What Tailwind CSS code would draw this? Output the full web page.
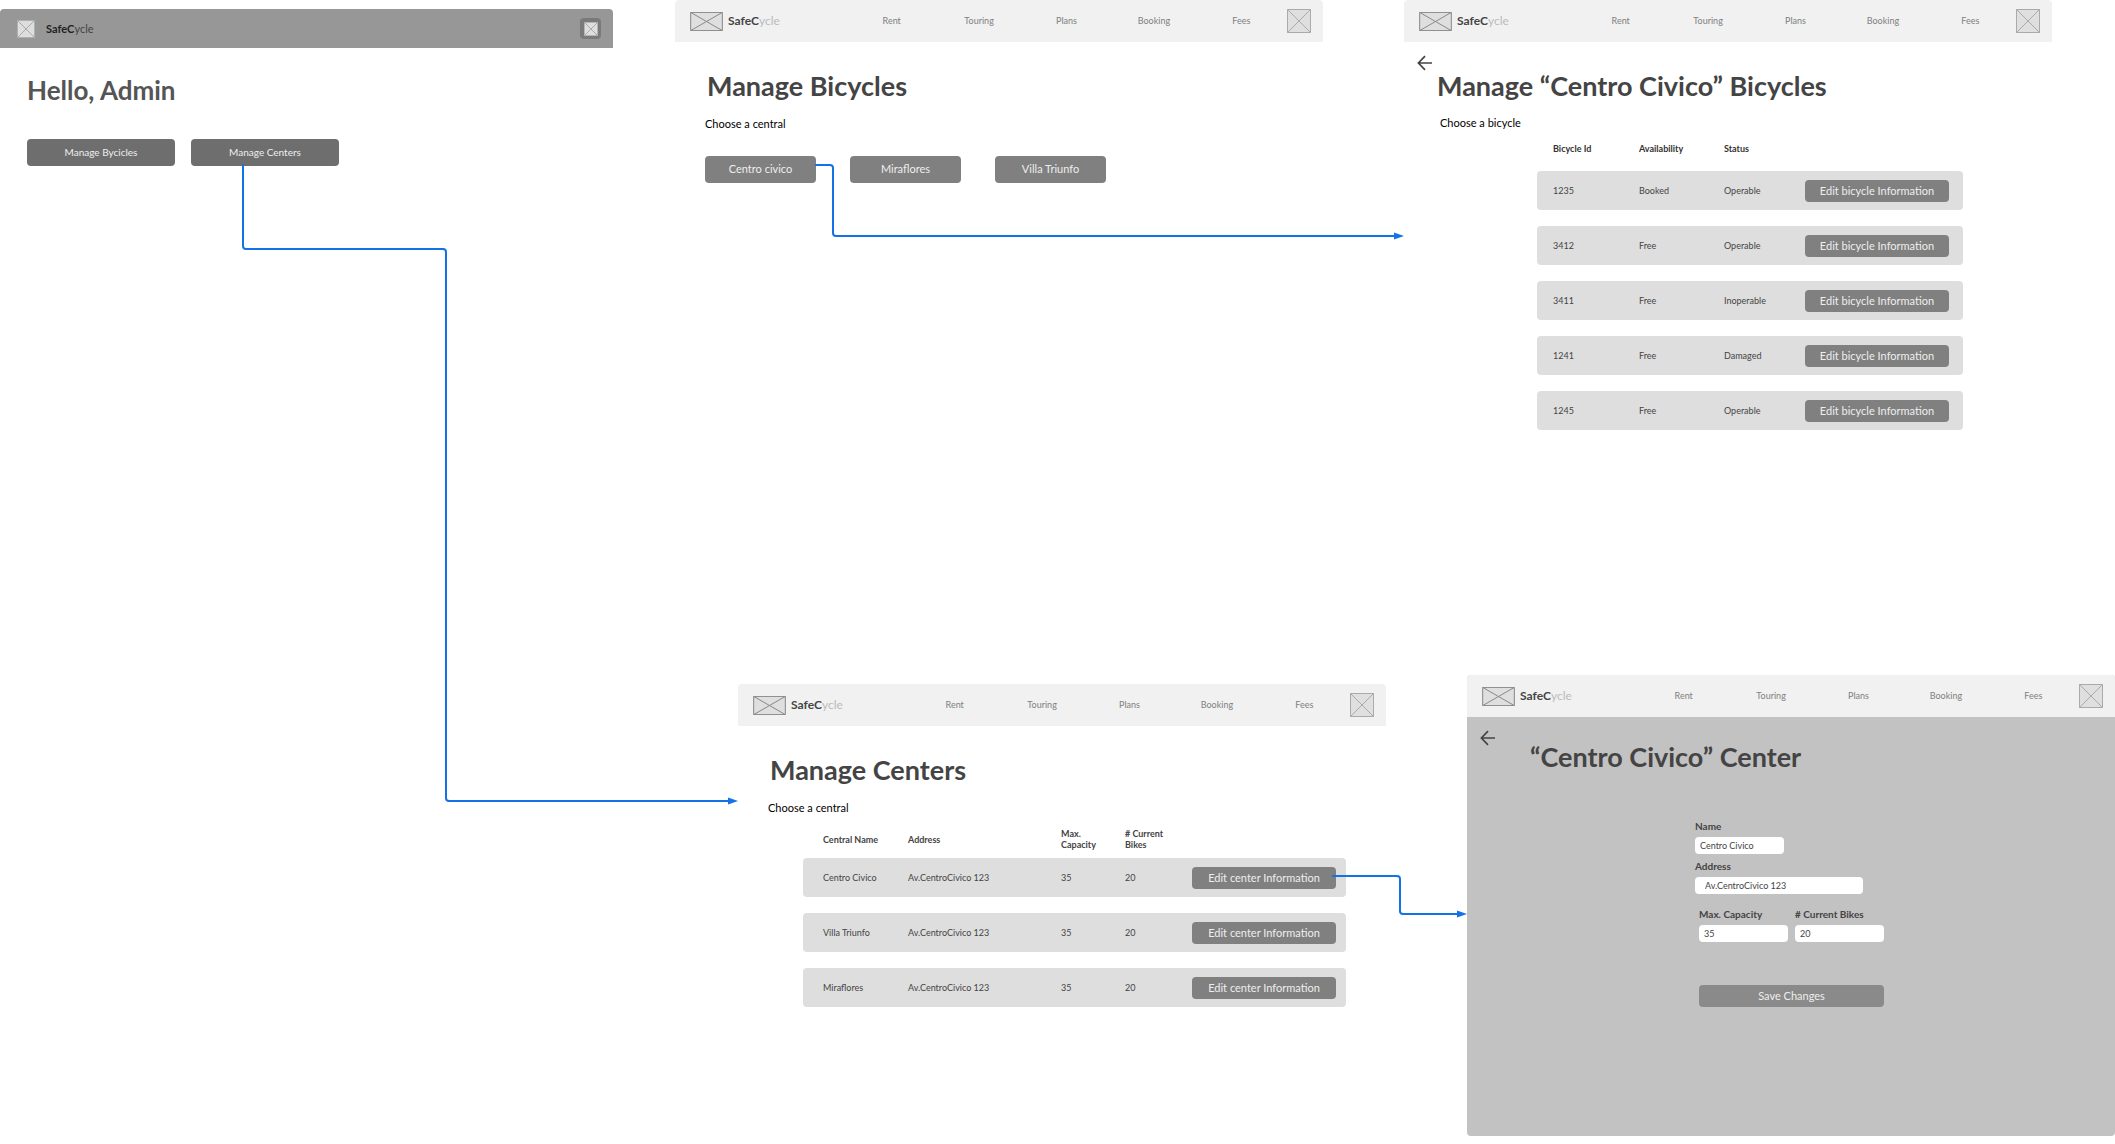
<!DOCTYPE html>
<html lang="en">
<head>
<meta charset="utf-8">
<title>SafeCycle admin flow</title>
<script src="https://cdn.jsdelivr.net/npm/@tailwindcss/browser@4"></script>
</head>
<body class="bg-white">
<svg class="hidden">
  <symbol id="cross" viewBox="0 0 24 24" preserveAspectRatio="none">
    <path d="M0.5 0.5H23.5V23.5H0.5ZM0.5 0.5L23.5 23.5M23.5 0.5L0.5 23.5" fill="none" stroke="currentColor" stroke-width="1" vector-effect="non-scaling-stroke"/>
  </symbol>
  <symbol id="back" viewBox="0 0 16 16">
    <path d="M15 8H1.5M8 1.2L1.4 8L8 14.8" fill="none" stroke="currentColor" stroke-width="1.7"/>
  </symbol>
</svg>

<main class="relative min-h-screen overflow-hidden font-['Lato',sans-serif] text-[#444]">

  <!-- Admin home -->
  <section class="absolute left-0 top-[9px] w-[613px]">
    <header class="flex h-[39px] items-center rounded-t bg-[#979797] pl-[17px] pr-3">
      <svg class="h-[18px] w-[18px] bg-[#dedede] text-[#aaa]"><use href="#cross"/></svg>
      <a href="#" class="ml-[11px] text-[11px] leading-4 text-[#444]"><b class="text-[#222]">SafeC</b>ycle</a>
      <button aria-label="Account" class="ml-auto flex h-[21px] w-[21px] items-center justify-center rounded bg-[#7a7a7a]">
        <svg class="h-[14px] w-[14px] bg-[#dedede] text-[#aaa]"><use href="#cross"/></svg>
      </button>
    </header>
    <div class="px-[27px] pt-6">
      <h1 class="text-[26px] font-bold leading-9 text-[#555]">Hello, Admin</h1>
      <div class="mt-[31px] flex gap-4">
        <button class="h-[27px] w-[148px] rounded bg-[#6e6e6e] text-[10px] text-[#eee]">Manage Bycicles</button>
        <button class="h-[27px] w-[148px] rounded bg-[#6e6e6e] text-[10px] text-[#eee]">Manage Centers</button>
      </div>
    </div>
  </section>

  <!-- Manage bicycles -->
  <section class="absolute left-[675px] top-0 w-[648px]">
    <header class="flex h-[42px] items-center rounded-t bg-[#f1f1f1] pl-[15px] pr-3">
      <svg class="h-[19px] w-[33px] bg-[#dfdfdf] text-[#888]"><use href="#cross"/></svg>
      <a href="#" class="ml-[5px] text-[12px] leading-4 text-[#bbb]"><b class="text-[#444]">SafeC</b>ycle</a>
      <nav class="ml-auto mr-[2px] grid w-[437px] grid-cols-5 text-center text-[9px] text-[#808080]">
        <a href="#">Rent</a><a href="#">Touring</a><a href="#">Plans</a><a href="#">Booking</a><a href="#">Fees</a>
      </nav>
      <svg class="h-6 w-6 bg-[#dfdfdf] text-[#aaa]"><use href="#cross"/></svg>
    </header>
    <div class="px-[30px] pt-[26px]">
      <h1 class="pl-[2px] text-[27px] font-bold leading-9">Manage Bicycles</h1>
      <p class="mt-3 text-[11px] leading-4 text-black">Choose a central</p>
      <div class="mt-6 flex gap-[34px]">
        <button class="h-[27px] w-[111px] rounded bg-[#808080] text-[11px] text-[#eee]">Centro civico</button>
        <button class="h-[27px] w-[111px] rounded bg-[#808080] text-[11px] text-[#eee]">Miraflores</button>
        <button class="h-[27px] w-[111px] rounded bg-[#808080] text-[11px] text-[#eee]">Villa Triunfo</button>
      </div>
    </div>
  </section>

  <!-- Bicycles of one center -->
  <section class="absolute left-[1404px] top-0 w-[648px]">
    <header class="flex h-[42px] items-center rounded-t bg-[#f1f1f1] pl-[15px] pr-3">
      <svg class="h-[19px] w-[33px] bg-[#dfdfdf] text-[#888]"><use href="#cross"/></svg>
      <a href="#" class="ml-[5px] text-[12px] leading-4 text-[#bbb]"><b class="text-[#444]">SafeC</b>ycle</a>
      <nav class="ml-auto mr-[2px] grid w-[437px] grid-cols-5 text-center text-[9px] text-[#808080]">
        <a href="#">Rent</a><a href="#">Touring</a><a href="#">Plans</a><a href="#">Booking</a><a href="#">Fees</a>
      </nav>
      <svg class="h-6 w-6 bg-[#dfdfdf] text-[#aaa]"><use href="#cross"/></svg>
    </header>
    <div class="flex items-start pl-[13px] pt-[13px]">
      <button aria-label="Back" class="h-4 w-4"><svg class="h-4 w-4"><use href="#back"/></svg></button>
      <div class="pl-1 pt-[13px]">
        <h1 class="text-[27px] font-bold leading-9">Manage “Centro Civico” Bicycles</h1>
        <p class="mt-[11px] pl-[3px] text-[11px] leading-4 text-black">Choose a bicycle</p>
      </div>
    </div>
    <table class="ml-[133px] mt-3 block w-[426px] text-left text-[9px] leading-3">
      <thead class="block"><tr class="grid grid-cols-[86px_85px_81px_144px] pl-4 text-[#333]">
        <th>Bicycle Id</th><th>Availability</th><th>Status</th>
      </tr></thead>
      <tbody class="mt-4 flex flex-col gap-4">
        <tr class="grid h-[39px] grid-cols-[86px_85px_81px_144px] items-center rounded bg-[#dedede] pl-4"><td>1235</td><td>Booked</td><td>Operable</td><td><button class="block h-[22px] w-full rounded bg-[#808080] text-[11px] text-[#eee]">Edit bicycle Information</button></td></tr>
        <tr class="grid h-[39px] grid-cols-[86px_85px_81px_144px] items-center rounded bg-[#dedede] pl-4"><td>3412</td><td>Free</td><td>Operable</td><td><button class="block h-[22px] w-full rounded bg-[#808080] text-[11px] text-[#eee]">Edit bicycle Information</button></td></tr>
        <tr class="grid h-[39px] grid-cols-[86px_85px_81px_144px] items-center rounded bg-[#dedede] pl-4"><td>3411</td><td>Free</td><td>Inoperable</td><td><button class="block h-[22px] w-full rounded bg-[#808080] text-[11px] text-[#eee]">Edit bicycle Information</button></td></tr>
        <tr class="grid h-[39px] grid-cols-[86px_85px_81px_144px] items-center rounded bg-[#dedede] pl-4"><td>1241</td><td>Free</td><td>Damaged</td><td><button class="block h-[22px] w-full rounded bg-[#808080] text-[11px] text-[#eee]">Edit bicycle Information</button></td></tr>
        <tr class="grid h-[39px] grid-cols-[86px_85px_81px_144px] items-center rounded bg-[#dedede] pl-4"><td>1245</td><td>Free</td><td>Operable</td><td><button class="block h-[22px] w-full rounded bg-[#808080] text-[11px] text-[#eee]">Edit bicycle Information</button></td></tr>
      </tbody>
    </table>
  </section>

  <!-- Manage centers -->
  <section class="absolute left-[738px] top-[684px] w-[648px]">
    <header class="flex h-[42px] items-center rounded-t bg-[#f1f1f1] pl-[15px] pr-3">
      <svg class="h-[19px] w-[33px] bg-[#dfdfdf] text-[#888]"><use href="#cross"/></svg>
      <a href="#" class="ml-[5px] text-[12px] leading-4 text-[#bbb]"><b class="text-[#444]">SafeC</b>ycle</a>
      <nav class="ml-auto mr-[2px] grid w-[437px] grid-cols-5 text-center text-[9px] text-[#808080]">
        <a href="#">Rent</a><a href="#">Touring</a><a href="#">Plans</a><a href="#">Booking</a><a href="#">Fees</a>
      </nav>
      <svg class="h-6 w-6 bg-[#dfdfdf] text-[#aaa]"><use href="#cross"/></svg>
    </header>
    <div class="px-[30px] pt-[26px]">
      <h1 class="pl-[2px] text-[27px] font-bold leading-9">Manage Centers</h1>
      <p class="mt-3 text-[11px] leading-4 text-black">Choose a central</p>
    </div>
    <table class="ml-[65px] mt-3 block w-[543px] text-left text-[9px] leading-[11px]">
      <thead class="block"><tr class="grid h-[22px] grid-cols-[85px_153px_64px_67px_144px] items-center pl-5">
        <th>Central Name</th><th>Address</th><th>Max.<br>Capacity</th><th># Current<br>Bikes</th>
      </tr></thead>
      <tbody class="mt-2 flex flex-col gap-4">
        <tr class="grid h-[39px] grid-cols-[85px_153px_64px_67px_144px] items-center rounded bg-[#dedede] pl-5"><td>Centro Civico</td><td>Av.CentroCivico 123</td><td>35</td><td>20</td><td><button class="block h-[22px] w-full rounded bg-[#808080] text-[11px] text-[#eee]">Edit center Information</button></td></tr>
        <tr class="grid h-[39px] grid-cols-[85px_153px_64px_67px_144px] items-center rounded bg-[#dedede] pl-5"><td>Villa Triunfo</td><td>Av.CentroCivico 123</td><td>35</td><td>20</td><td><button class="block h-[22px] w-full rounded bg-[#808080] text-[11px] text-[#eee]">Edit center Information</button></td></tr>
        <tr class="grid h-[39px] grid-cols-[85px_153px_64px_67px_144px] items-center rounded bg-[#dedede] pl-5"><td>Miraflores</td><td>Av.CentroCivico 123</td><td>35</td><td>20</td><td><button class="block h-[22px] w-full rounded bg-[#808080] text-[11px] text-[#eee]">Edit center Information</button></td></tr>
      </tbody>
    </table>
  </section>

  <!-- Edit one center -->
  <section class="absolute left-[1467px] top-[675px] w-[648px] rounded bg-[#c2c2c2] pb-[129px]">
    <header class="flex h-[42px] items-center rounded-t bg-[#f1f1f1] pl-[15px] pr-3">
      <svg class="h-[19px] w-[33px] bg-[#dfdfdf] text-[#888]"><use href="#cross"/></svg>
      <a href="#" class="ml-[5px] text-[12px] leading-4 text-[#bbb]"><b class="text-[#444]">SafeC</b>ycle</a>
      <nav class="ml-auto mr-[2px] grid w-[437px] grid-cols-5 text-center text-[9px] text-[#808080]">
        <a href="#">Rent</a><a href="#">Touring</a><a href="#">Plans</a><a href="#">Booking</a><a href="#">Fees</a>
      </nav>
      <svg class="h-6 w-6 bg-[#dfdfdf] text-[#aaa]"><use href="#cross"/></svg>
    </header>
    <div class="flex items-start pl-[13px] pt-[13px]">
      <button aria-label="Back" class="h-4 w-4"><svg class="h-4 w-4"><use href="#back"/></svg></button>
      <h1 class="pl-[34px] pt-[9px] text-[27px] font-bold leading-9">“Centro Civico” Center</h1>
    </div>
    <form class="ml-[228px] mt-[45px] w-[189px] text-[9px]">
      <label for="name" class="block text-[10px] font-bold leading-3">Name</label>
      <input id="name" value="Centro Civico" class="mt-[5px] block h-[17px] w-[89px] rounded bg-white px-[5px]">
      <label for="address" class="mt-[6px] block text-[10px] font-bold leading-3">Address</label>
      <input id="address" value="Av.CentroCivico 123" class="mt-[5px] block h-[17px] w-[168px] rounded bg-white px-[10px]">
      <div class="mt-[14px] grid grid-cols-2 gap-[7px] pl-1">
        <div>
          <label for="capacity" class="block text-[10px] font-bold leading-3">Max. Capacity</label>
          <input id="capacity" value="35" class="mt-[5px] block h-[17px] w-full rounded bg-white px-[5px]">
        </div>
        <div>
          <label for="bikes" class="block whitespace-nowrap text-[10px] font-bold leading-3"># Current Bikes</label>
          <input id="bikes" value="20" class="mt-[5px] block h-[17px] w-full rounded bg-white px-[5px]">
        </div>
      </div>
      <div class="pl-1 pt-[43px]">
        <button type="button" class="block h-[22px] w-full rounded bg-[#8a8a8a] text-[11px] text-[#eee]">Save Changes</button>
      </div>
    </form>
  </section>

  <!-- Flow connectors -->
  <svg class="pointer-events-none absolute left-0 top-0 h-[1144px] w-[2115px]" fill="none" stroke="#1272e6" stroke-width="2">
    <path d="M243 164V246Q243 249 246 249H443Q446 249 446 252V798Q446 801 449 801H730"/>
    <path d="M815 165H830Q833 165 833 168V233Q833 236 836 236H1396"/>
    <path d="M1332 876H1397Q1400 876 1400 879V911Q1400 914 1403 914H1459"/>
    <path d="M728 797.500L738 801L728 804.500ZM1394 232.500L1404 236L1394 239.500ZM1457 910.500L1467 914L1457 917.500Z" fill="#1272e6" stroke="none"/>
  </svg>
</main>
</body>
</html>
